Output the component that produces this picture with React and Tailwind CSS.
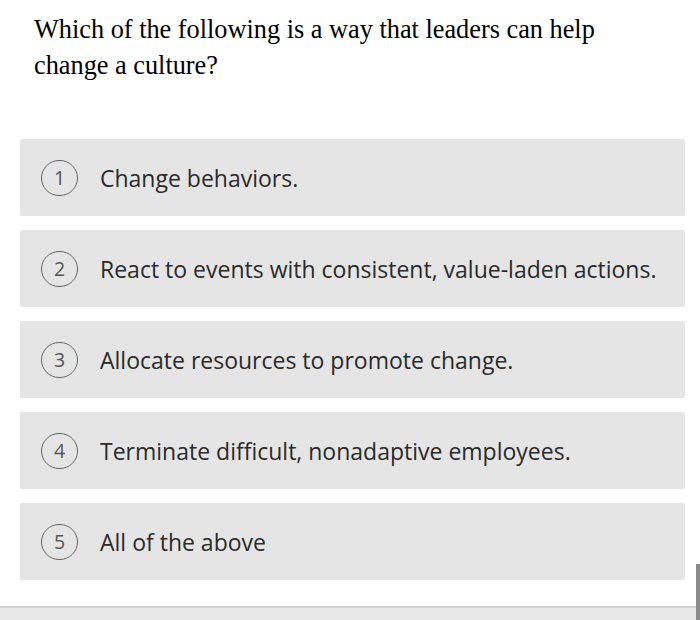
import React from "react";

const options = [
  "Change behaviors.",
  "React to events with consistent, value-laden actions.",
  "Allocate resources to promote change.",
  "Terminate difficult, nonadaptive employees.",
  "All of the above",
];

export default function App() {
  return (
    <div className="relative w-[700px] h-[620px] bg-white overflow-hidden flex flex-col">
      <div className="pl-[34px] pr-[20px] pt-[12px] text-[26.3px] leading-[36px] text-black [font-family:'Liberation_Serif',serif]">
        Which of the following is a way that leaders can help
        <br />
        change a culture?
      </div>
      <div className="mt-[55px] flex flex-col gap-[14px] pl-[20px] pr-[15px]">
        {options.map((o, i) => (
          <div
            key={i}
            className="h-[77px] bg-[#e5e5e5] rounded-[2px] flex items-center gap-[22px] pl-[21px]"
          >
            <div className="w-[37px] h-[36px] shrink-0 rounded-full border-[1.5px] border-[#666] flex items-center justify-center text-[19.5px] text-[#555] [font-family:'Open_Sans',sans-serif]">
              {i + 1}
            </div>
            <span className="pt-[2px] text-[23px] text-[#2b2b2b] [font-family:'Open_Sans',sans-serif]">
              {o}
            </span>
          </div>
        ))}
      </div>
      <div className="mt-auto h-[14px] border-t-2 border-[#d0d0d0] bg-[#e8e8e8]" />
      <div className="absolute right-0 top-[564px] w-[4px] bottom-0 bg-[#8a8a8a]" />
    </div>
  );
}
